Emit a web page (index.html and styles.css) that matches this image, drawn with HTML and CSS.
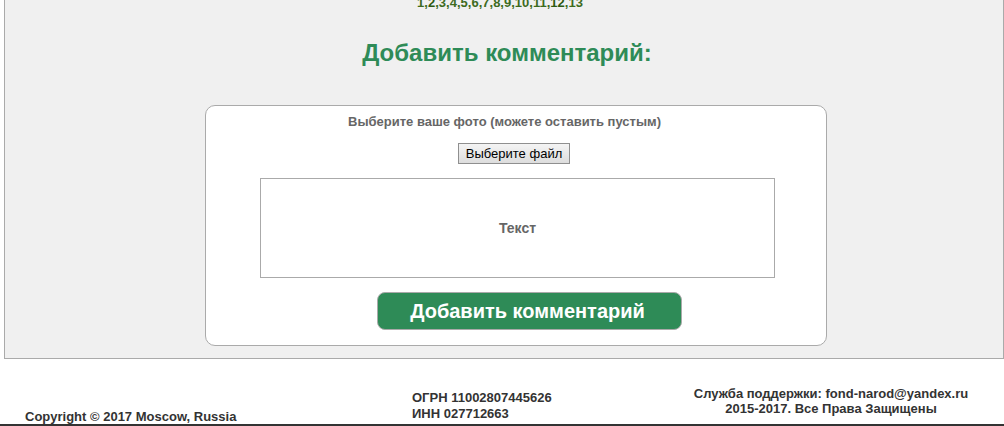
FILE: index.html
```html
<!DOCTYPE html>
<html lang="ru">
<head>
  <meta charset="UTF-8">
  <title>Добавить комментарий</title>
  <meta name="viewport" content="width=device-width, initial-scale=1.0">
  <link rel="stylesheet" href="styles.css">
</head>
<body>

  <!-- Основной блок -->
  <div id="content">
    <div class="pages">
      <a href="#">1</a>,<a href="#" class="current">2</a>,<a href="#">3</a>,<a href="#">4</a>,<a href="#">5</a>,<a href="#">6</a>,<a href="#">7</a>,<a href="#">8</a>,<a href="#">9</a>,<a href="#">10</a>,<a href="#">11</a>,<a href="#" class="current">12</a>,<a href="#">13</a>
    </div>

    <h2 class="title">Добавить комментарий:</h2>

    <form class="comment-form">
      <div class="photo-label">Выберите ваше фото (можете оставить пустым)</div>
      <div class="file-row">
        <label class="file-btn">Выберите файл<input type="file" class="file-input"></label>
      </div>
      <textarea class="comment-text" placeholder="Текст"></textarea>
      <button type="button" class="send-btn">Добавить комментарий</button>
    </form>
  </div>

  <!-- Подвал -->
  <div id="footer">
    <div class="copy">Copyright © 2017 Moscow, Russia</div>
    <div class="reg">ОГРН 11002807445626<br>ИНН 027712663</div>
    <div class="support">Служба поддержки: fond-narod@yandex.ru<br>2015-2017. Все Права Защищены</div>
  </div>

</body>
</html>
```

FILE: styles.css
```css
body {
  font-family: "Liberation Sans", Arial, sans-serif;
  background: #ffffff;
  margin: 0;
  padding: 0;
  overflow: hidden;
}

#content {
  margin-left: 4px;
  background: #f0f0f0;
  border: 1px solid #aaaaaa;
  border-top: none;
  padding-bottom: 12px;
}

.pages {
  margin-top: -5px;
  text-align: center;
  font-size: 13px;
  font-weight: bold;
  line-height: 15px;
  color: #3d6b1e;
  padding-right: 8px;
}

.pages a {
  color: #3d6b1e;
  text-decoration: none;
}

.pages a.current {
  color: #2d5a10;
}

.title {
  margin: 29px 0 0;
  padding-left: 6px;
  text-align: center;
  font-size: 24px;
  line-height: 28px;
  color: #2e8b57;
}

.comment-form {
  margin: 38px 0 0 200px;
  width: 620px;
  background: #ffffff;
  border: 1px solid #aaaaaa;
  border-radius: 10px;
  padding: 8px 0 15px;
}

.photo-label {
  margin-right: 23px;
  text-align: center;
  font-size: 13px;
  font-weight: bold;
  line-height: 15px;
  color: #666666;
}

.file-row {
  margin-top: 14px;
  padding-left: 252px;
  height: 21px;
}

.file-btn {
  display: inline-block;
  box-sizing: border-box;
  width: 112px;
  height: 21px;
  line-height: 19px;
  text-align: center;
  font-size: 13px;
  color: #000000;
  background: linear-gradient(#f4f4f4, #dddddd);
  border: 1px solid #8f8f8f;
  cursor: pointer;
}

.file-input {
  display: none;
}

.comment-text {
  display: block;
  box-sizing: border-box;
  margin: 14px 0 0 54px;
  width: 515px;
  height: 100px;
  border: 1px solid #aaaaaa;
  resize: none;
  padding: 41px 10px 0;
  font-family: "Liberation Sans", Arial, sans-serif;
  font-size: 14px;
  font-weight: bold;
  text-align: center;
  color: #666666;
}

.comment-text::placeholder {
  color: #666666;
}

.send-btn {
  display: block;
  box-sizing: border-box;
  margin: 14px 0 0 171px;
  width: 305px;
  height: 38px;
  padding: 0 4px 0 0;
  border: 1px solid #aaaaaa;
  border-radius: 8px;
  background-color: #2e8b57;
  color: white;
  font-family: "Liberation Sans", Arial, sans-serif;
  font-size: 20px;
  font-weight: bold;
  cursor: pointer;
}

#footer {
  display: flex;
  height: 65px;
  border-bottom: 2px solid #333333;
  font-size: 13px;
  font-weight: bold;
  color: #333333;
}

.copy {
  width: 387px;
  padding: 50px 0 0 25px;
  line-height: 16px;
}

.reg {
  width: 246px;
  padding-top: 31px;
  line-height: 16px;
}

.support {
  flex: 1;
  padding-top: 27px;
  line-height: 15px;
  text-align: center;
}
```
